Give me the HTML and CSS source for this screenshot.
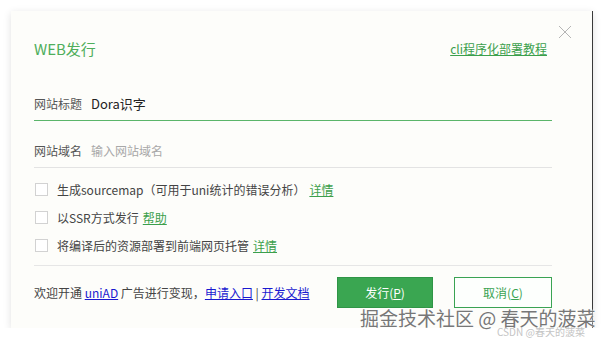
FILE: index.html
```html
<!DOCTYPE html>
<html lang="zh-CN">
  <head>
    <meta charset="utf-8">
    <title>WEB发行</title>
    <link rel="stylesheet" href="styles.css">
  </head>
  <body>
    <div class="dialog">
      <span class="close">
        <svg width="14" height="14" viewBox="0 0 14 14"><path d="M1 1 L13 13 M13 1 L1 13" stroke="#b5b5b5" stroke-width="1" fill="none"/></svg>
      </span>
      <div class="header">
        <span class="title">WEB发行</span>
        <a class="green-link" href="#">cli程序化部署教程</a>
      </div>

      <div class="field active">
        <span class="label">网站标题</span>
        <span class="value">Dora识字</span>
      </div>
      <div class="field">
        <span class="label">网站域名</span>
        <span class="placeholder">输入网站域名</span>
      </div>

      <div class="options">
        <div class="option">
          <span class="box"></span>
          <span>生成sourcemap（可用于uni统计的错误分析）</span>
          <a class="green-link" href="#">详情</a>
        </div>
        <div class="option">
          <span class="box"></span>
          <span>以SSR方式发行</span>
          <a class="green-link" href="#">帮助</a>
        </div>
        <div class="option">
          <span class="box"></span>
          <span>将编译后的资源部署到前端网页托管</span>
          <a class="green-link" href="#">详情</a>
        </div>
      </div>

      <div class="footer">
        <div class="ad">
          欢迎开通 <a href="#">uniAD</a> 广告进行变现，<a href="#">申请入口</a> | <a href="#">开发文档</a>
        </div>
        <div class="buttons">
          <button class="btn primary">发行(<u>P</u>)</button>
          <button class="btn">取消(<u>C</u>)</button>
        </div>
      </div>
    </div>

    <div class="watermark">掘金技术社区 @ 春天的菠菜</div>
    <div class="watermark-small">CSDN @春天的菠菜</div>
  </body>
</html>
```

FILE: styles.css
```css
body
{
    margin: 0;
    background: #ffffff;
    font-family: "Noto Sans CJK SC", "DejaVu Sans", sans-serif;
    font-size: 12px;
    color: #333;
}

.dialog
{
    position: relative;
    margin: 11px 0 0 11px;
    width: 582px;
    height: 317px;
    box-sizing: border-box;
    padding: 27px 40px 0 23px;
    background: #fdfdfa;
    border-right: 1px solid #3a3a3a;
    box-shadow: 0 2px 8px rgba(0, 0, 0, 0.12);
    display: flex;
    flex-direction: column;
}

.close
{
    position: absolute;
    top: 14px;
    right: 20px;
    line-height: 0;
}

.header
{
    height: 20px;
    display: flex;
    align-items: center;
    justify-content: space-between;
    padding-right: 5px;
}

.title
{
    color: #4fae5b;
    font-size: 15px;
}

.green-link
{
    color: #3b9f4c;
    text-decoration: underline;
    font-size: 12px;
}

.field
{
    height: 34px;
    display: flex;
    align-items: center;
    gap: 9px;
    border-bottom: 1px solid #e3e3e3;
    margin-top: 12px;
}

.field.active
{
    margin-top: 28px;
    border-bottom-color: #5bb56a;
}

.label { color: #555; }
.value { color: #222; font-size: 13px; }
.placeholder { color: #a8a8a8; }

.options
{
    margin-top: 7px;
    display: flex;
    flex-direction: column;
    border-bottom: 1px solid #e6e6e6;
    padding-bottom: 6px;
}

.option
{
    height: 28px;
    display: flex;
    align-items: center;
    color: #444;
}

.box
{
    width: 11px;
    height: 11px;
    border: 1px solid #d2d2d2;
    background: #fff;
    margin: 0 9px 0 1px;
}

.option .green-link { margin-left: 4px; }

.footer
{
    display: flex;
    align-items: center;
    justify-content: space-between;
    padding-top: 11px;
}

.ad { color: #444; }

.ad a
{
    color: #1a1ad0;
    text-decoration: underline;
}

.buttons
{
    display: flex;
    gap: 21px;
}

.btn
{
    width: 98px;
    height: 31px;
    font-family: inherit;
    font-size: 12px;
    color: #3aa353;
    background: #fdfffd;
    border: 1px solid #3aa353;
}

.btn.primary
{
    width: 96px;
    color: #fff;
    background: #3aa651;
    border-color: #2f9546;
}

.btn u { text-underline-offset: 1px; }

.watermark
{
    position: absolute;
    left: 360px;
    top: 304px;
    font-size: 19px;
    color: #777;
    text-shadow: 0 0 2px #fff, 0 0 2px #fff;
}

.watermark-small
{
    position: absolute;
    left: 497px;
    top: 324px;
    font-size: 10px;
    color: #c4c4c4;
}
```
